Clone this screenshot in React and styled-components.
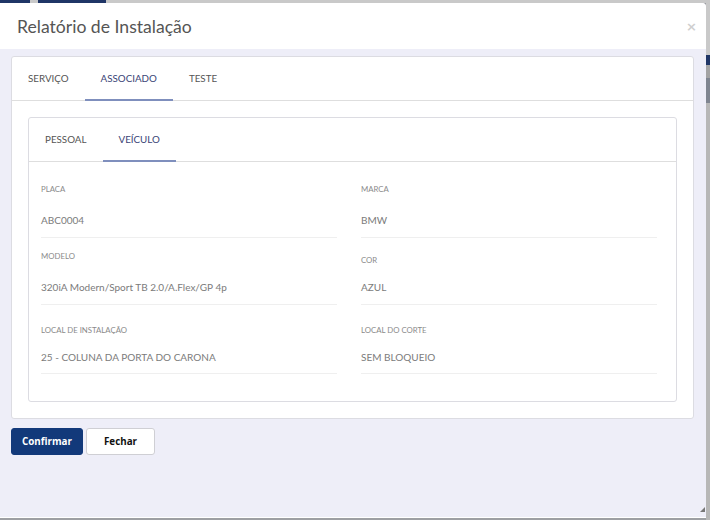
import styled, { createGlobalStyle } from "styled-components";

const GlobalStyle = createGlobalStyle`
  html, body {
    margin: 0;
    padding: 0;
  }
  body {
    font-family: Lato, "Open Sans", sans-serif;
    background: #a8a8a8;
  }
`;

const Backdrop = styled.div`
  position: relative;
  width: 710px;
  height: 520px;
  overflow: hidden;
  background: #9d9fa3;
`;

const TopStrip = styled.div`
  display: flex;
  height: 3px;
  background: #c9c9c9;
  gap: 8px;
`;

const StripBlock = styled.div`
  width: ${(p) => p.w}px;
  background: #1f3566;
`;

const Dialog = styled.div`
  width: 706px;
  height: 514px;
  display: flex;
  flex-direction: column;
  background: #eeeef8;
  border-top-right-radius: 4px;
  border-bottom: 1px solid #fff;
  overflow: hidden;
`;

const Header = styled.div`
  height: 46px;
  flex-shrink: 0;
  display: flex;
  align-items: center;
  justify-content: space-between;
  padding: 0 9px 0 17px;
  background: #fff;
`;

const Title = styled.h4`
  margin: 0;
  font-size: 17.6px;
  font-weight: 400;
  color: #555;
`;

const Close = styled.span`
  font-family: "DejaVu Sans", sans-serif;
  font-size: 13px;
  font-weight: 700;
  color: #cfcfcf;
`;

const Body = styled.div`
  flex: 1;
  padding: 7px 12px 0 11px;
`;

const Card = styled.div`
  background: #fff;
  border: 1px solid #dcdce2;
  border-radius: 3px;
`;

const Tabs = styled.div`
  display: flex;
  height: 43px;
  border-bottom: 1px solid #dedede;
`;

const Tab = styled.div`
  display: flex;
  align-items: center;
  padding: 0 16px;
  font-size: 9.8px;
  color: ${(p) => (p.active ? "#3a4476" : "#555")};
  border-bottom: 2px solid ${(p) => (p.active ? "#7f8fbd" : "transparent")};
  margin-bottom: -1px;
`;

const CardContent = styled.div`
  padding: 16px;
`;

const InnerCard = styled.div`
  border: 1px solid #dcdce2;
  border-radius: 3px;
`;

const Fields = styled.div`
  display: grid;
  grid-template-columns: 320px 320px;
  row-gap: 12px;
  padding: 21px 0 27px 12px;
`;

const Field = styled.div`
  display: flex;
  flex-direction: column;
  margin-right: 24px;
  margin-top: ${(p) => (p.tight ? 7 : 0)}px;
`;

const Label = styled.div`
  height: 12px;
  line-height: 12px;
  font-size: 7.8px;
  color: #8a8a8a;
  padding-top: ${(p) => p.shift || 0}px;
  margin-bottom: ${(p) => 17 - (p.shift || 0) - (p.tight ? 4 : 0)}px;
`;

const Value = styled.div`
  height: 16px;
  line-height: 16px;
  font-size: 10px;
  color: #7b7b7b;
  padding-bottom: ${(p) => (p.tight ? 8 : 9)}px;
  border-bottom: 1px solid #efefef;
`;

const Actions = styled.div`
  display: flex;
  gap: 3px;
  margin-top: 9px;
`;

const Button = styled.button`
  height: 27px;
  width: ${(p) => (p.primary ? 72 : 69)}px;
  padding: 0;
  font-family: "Open Sans", sans-serif;
  font-size: 9.8px;
  font-weight: 700;
  border-radius: 3px;
  border: 1px solid ${(p) => (p.primary ? "#12397a" : "#cfcfd4")};
  background: ${(p) => (p.primary ? "#12397a" : "#fff")};
  color: ${(p) => (p.primary ? "#fff" : "#111")};
`;

const SideStrip = styled.div`
  position: absolute;
  top: 3px;
  right: 0;
  width: 4px;
  height: 517px;
  background: linear-gradient(#c9c9c9 0 52px, #1f3566 52px 62px, #a3a3a3 62px 75px, #7f8590 75px 100px, #b7b7b7 100px);
`;

const Grip = styled.div`
  position: absolute;
  right: 5px;
  bottom: 8px;
  width: 0;
  height: 0;
  border-left: 5px solid transparent;
  border-bottom: 5px solid #777;
`;

const fields = [
  { label: "PLACA", value: "ABC0004" },
  { label: "MARCA", value: "BMW" },
  { label: "MODELO", value: "320iA Modern/Sport TB 2.0/A.Flex/GP 4p" },
  { label: "COR", value: "AZUL", shift: 4 },
  { label: "LOCAL DE INSTALAÇÃO", value: "25 - COLUNA DA PORTA DO CARONA", tight: true },
  { label: "LOCAL DO CORTE", value: "SEM BLOQUEIO", tight: true },
];

export default function App() {
  return (
    <>
      <GlobalStyle />
      <Backdrop>
        <TopStrip>
          <StripBlock w={30} />
          <StripBlock w={68} />
        </TopStrip>
        <Dialog>
          <Header>
            <Title>Relatório de Instalação</Title>
            <Close>×</Close>
          </Header>
          <Body>
            <Card>
              <Tabs>
                <Tab>SERVIÇO</Tab>
                <Tab active>ASSOCIADO</Tab>
                <Tab>TESTE</Tab>
              </Tabs>
              <CardContent>
                <InnerCard>
                  <Tabs>
                    <Tab>PESSOAL</Tab>
                    <Tab active>VEÍCULO</Tab>
                  </Tabs>
                  <Fields>
                    {fields.map((f) => (
                      <Field key={f.label} tight={f.tight}>
                        <Label shift={f.shift} tight={f.tight}>
                          {f.label}
                        </Label>
                        <Value tight={f.tight}>{f.value}</Value>
                      </Field>
                    ))}
                  </Fields>
                </InnerCard>
              </CardContent>
            </Card>
            <Actions>
              <Button primary>Confirmar</Button>
              <Button>Fechar</Button>
            </Actions>
          </Body>
        </Dialog>
        <SideStrip />
        <Grip />
      </Backdrop>
    </>
  );
}
